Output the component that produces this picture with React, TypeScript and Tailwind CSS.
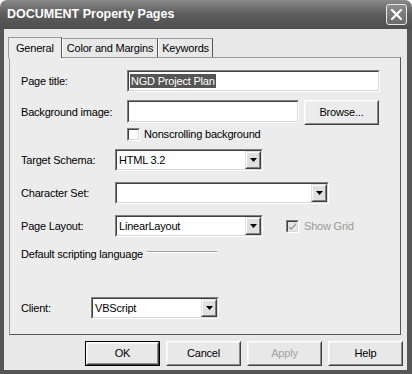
import React from 'react';

const font = { fontFamily: '"Liberation Sans", Arial, sans-serif' };

function Sunken({ className = '', children }: { className?: string; children?: React.ReactNode }) {
  return (
    <div className={`border border-t-[#808080] border-l-[#808080] border-r-white border-b-white ${className}`}>
      <div className="h-full w-full border border-t-[#404040] border-l-[#404040] border-r-[#d8d8d8] border-b-[#d8d8d8] bg-white flex items-center">
        {children}
      </div>
    </div>
  );
}

function DropButton() {
  return (
    <div className="h-full w-[16px] border border-t-[#e0e0e0] border-l-[#e0e0e0] border-r-[#404040] border-b-[#404040]">
      <div className="h-full w-full border border-t-white border-l-white border-r-[#808080] border-b-[#808080] bg-[#e0e0e0] flex items-center justify-center">
        <svg width="7" height="4" viewBox="0 0 7 4">
          <path d="M0 0h7L3.5 4z" fill="#000" />
        </svg>
      </div>
    </div>
  );
}

function Select({ value, className = '' }: { value?: string; className?: string }) {
  return (
    <Sunken className={className}>
      <span className="flex-1 pl-[2px] text-[11px] text-black">{value}</span>
      <DropButton />
    </Sunken>
  );
}

function Button({ label, isDefault, disabled }: { label: string; isDefault?: boolean; disabled?: boolean }) {
  return (
    <div className={`w-[75px] h-[25px] ${isDefault ? 'border border-black' : ''}`}>
      <div className="h-full w-full border border-t-white border-l-white border-r-[#404040] border-b-[#404040]">
        <div className="h-full w-full border border-t-[#f4f4f4] border-l-[#f4f4f4] border-r-[#8a8a8a] border-b-[#8a8a8a] flex items-center justify-center">
          <span className={`text-[11px] ${disabled ? 'text-[#a3a3a3]' : 'text-black'}`}>{label}</span>
        </div>
      </div>
    </div>
  );
}

function Checkbox({ checked, disabled }: { checked?: boolean; disabled?: boolean }) {
  return (
    <div className="w-[13px] h-[13px] border border-t-[#808080] border-l-[#808080] border-r-white border-b-white">
      <div className={`h-full w-full border border-t-[#404040] border-l-[#404040] border-r-[#d8d8d8] border-b-[#d8d8d8] flex items-center justify-center ${disabled ? 'bg-[#e6e6e6]' : 'bg-white'}`}>
        {checked && (
          <svg width="7" height="7" viewBox="0 0 7 7">
            <path d="M0 3l2 2 5-5v2L2 7 0 5z" fill={disabled ? '#9a9a9a' : '#000'} />
          </svg>
        )}
      </div>
    </div>
  );
}

export default function App() {
  return (
    <div className="w-[412px] h-[374px] flex flex-col bg-white select-none tracking-[-0.2px]" style={font}>
      {/* title bar */}
      <div className="h-[29px] shrink-0 rounded-t-[7px] bg-gradient-to-b from-[#8a8a8a] via-[#5c5c5c] to-[#4e4e4e] flex items-center justify-between pl-[7px] pr-[5px]">
        <span className="text-white font-bold text-[12.5px] tracking-normal">DOCUMENT Property Pages</span>
        <div className="w-[21px] h-[21px] rounded-[3px] border border-[#e8e8e8] bg-gradient-to-b from-[#8c8c8c] to-[#6a6a6a] flex items-center justify-center">
          <svg width="11" height="11" viewBox="0 0 11 11">
            <path d="M1 1l9 9M10 1l-9 9" stroke="#fff" strokeWidth="2.2" strokeLinecap="square" />
          </svg>
        </div>
      </div>

      {/* body */}
      <div className="flex-1 flex flex-col bg-[#e8e8e8] border-l-[4px] border-r-[5px] border-b-[4px] border-[#555555]">
        {/* tabs */}
        <div className="flex items-end h-[28px] pl-[4px]">
          <div className="h-[21px] px-[7px] flex items-center border border-b-0 border-t-[#9a9a9a] border-l-[#9a9a9a] border-r-[#555] bg-[#ececec] text-[11px] relative z-10 -mb-px">
            General
          </div>
          <div className="h-[19px] px-[4px] flex items-center border border-b-0 border-t-[#9a9a9a] border-l-white border-r-[#555] text-[11px]">
            Color and Margins
          </div>
          <div className="h-[19px] px-[3px] flex items-center border border-b-0 border-t-[#9a9a9a] border-l-white border-r-[#555] text-[11px]">
            Keywords
          </div>
        </div>

        {/* panel */}
        <div className="ml-[5px] mr-[6px] h-[278px] border border-t-[#9a9a9a] border-l-[#9a9a9a] border-r-[#555] border-b-[#555] bg-[#ececec] flex flex-col pl-[11px] text-[11px] text-black">
          <div className="mt-[12px] h-[22px] flex items-center">
            <span className="w-[106px]">Page title:</span>
            <Sunken className="w-[253px] h-[22px]">
              <span className="ml-[1px] bg-[#555555] text-white px-[1px] leading-[14px]">NGD Project Plan</span>
            </Sunken>
          </div>

          <div className="mt-[8px] h-[25px] flex items-center">
            <span className="w-[106px]">Background image:</span>
            <Sunken className="w-[172px] h-[23px] self-start" />
            <div className="ml-[5px]">
              <Button label="Browse..." />
            </div>
          </div>

          <div className="mt-[3px] h-[13px] flex items-center pl-[106px]">
            <Checkbox />
            <span className="ml-[4px]">Nonscrolling background</span>
          </div>

          <div className="mt-[8px] h-[22px] flex items-center">
            <span className="w-[94px]">Target Schema:</span>
            <Select className="w-[148px] h-[22px]" value="HTML 3.2" />
          </div>

          <div className="mt-[11px] h-[22px] flex items-center">
            <span className="w-[94px]">Character Set:</span>
            <Select className="w-[214px] h-[22px]" />
          </div>

          <div className="mt-[11px] h-[22px] flex items-center">
            <span className="w-[94px]">Page Layout:</span>
            <Select className="w-[148px] h-[22px]" value="LinearLayout" />
            <div className="ml-[23px] flex items-center">
              <Checkbox checked disabled />
              <span className="ml-[5px] text-[#9a9a9a]">Show Grid</span>
            </div>
          </div>

          <div className="mt-[11px] h-[13px] flex items-center">
            <span>Default scripting language</span>
            <div className="ml-[4px] w-[70px] h-[2px] border-t border-t-[#a0a0a0] border-b border-b-white self-start mt-[3px]" />
          </div>

          <div className="mt-[36px] h-[22px] flex items-center">
            <span className="w-[70px]">Client:</span>
            <Select className="w-[128px] h-[22px]" value="VBScript" />
          </div>
        </div>

        {/* buttons */}
        <div className="mt-[6px] flex justify-end gap-[6px] pr-[4px]">
          <Button label="OK" isDefault />
          <Button label="Cancel" />
          <Button label="Apply" disabled />
          <Button label="Help" />
        </div>
      </div>
    </div>
  );
}
